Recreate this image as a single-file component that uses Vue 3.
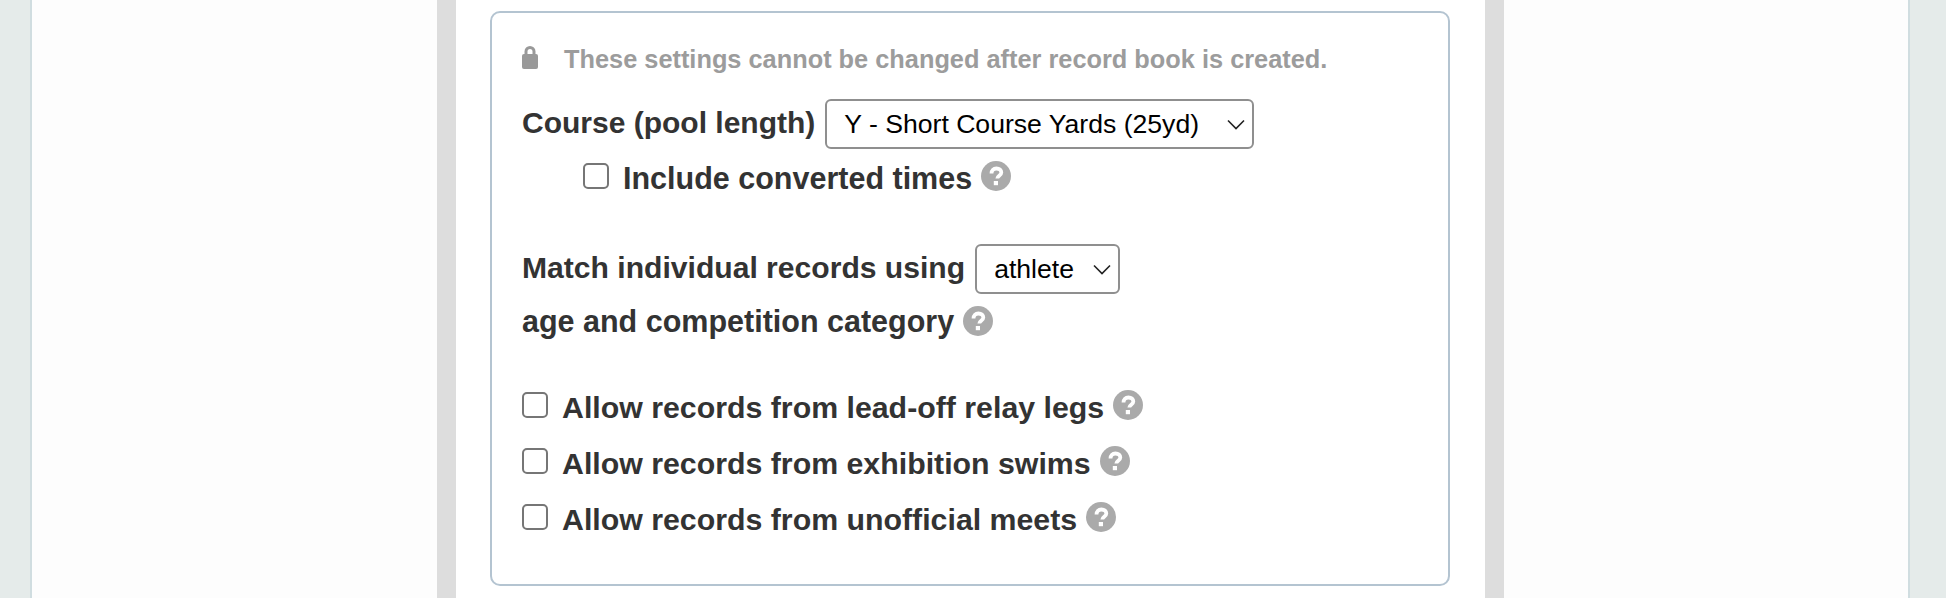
<script setup>
import { ref } from 'vue'

const curso = ref('Y')
const matchBy = ref('athlete')
const converted = ref(false)

const opcoes = ref([
  { id: 1, nome: 'Allow records from lead-off relay legs', marcado: false },
  { id: 2, nome: 'Allow records from exhibition swims', marcado: false },
  { id: 3, nome: 'Allow records from unofficial meets', marcado: false }
])
</script>

<template>
  <div class="page">
    <div class="panel">
      <div class="band">
        <div class="content">
          <svg width="0" height="0" class="defs">
            <symbol id="help" viewBox="0 0 30 30">
              <circle cx="15" cy="15" r="15" fill="#aaaaaa" />
              <path d="M10.500 12.500c0-3.200 2-5 4.900-5 3 0 4.900 1.600 4.900 3.900 0 3.300-4 3.300-4 6.100" fill="none" stroke="#fff" stroke-width="3.800" />
              <rect x="12.800" y="20" width="4.200" height="4.200" fill="#fff" />
            </symbol>
          </svg>
          <div class="box">
            <div class="note">
              <svg class="lock" width="16" height="23" viewBox="0 0 16 23">
                <path d="M4 9V5.500a4 4 0 0 1 8 0V9" fill="none" stroke="#999" stroke-width="3" />
                <rect x="0" y="8" width="16" height="15" rx="2" fill="#999" />
              </svg>
              <span>These settings cannot be changed after record book is created.</span>
            </div>

            <div class="row course">
              <label>Course (pool length)</label>
              <select v-model="curso" class="wide">
                <option value="Y">Y - Short Course Yards (25yd)</option>
                <option value="S">S - Short Course Meters (25m)</option>
                <option value="L">L - Long Course Meters (50m)</option>
              </select>
            </div>
            <div class="row check sub">
              <input v-model="converted" type="checkbox" />
              <label>Include converted times</label>
              <svg class="help"><use href="#help" /></svg>
            </div>

            <div class="row match">
              <label>Match individual records using</label>
              <select v-model="matchBy" class="narrow">
                <option value="athlete">athlete</option>
                <option value="team">team</option>
              </select>
            </div>
            <div class="row age">
              <label>age and competition category</label>
              <svg class="help"><use href="#help" /></svg>
            </div>

            <div class="allow">
              <div v-for="op in opcoes" :key="op.id" class="row check">
                <input v-model="op.marcado" type="checkbox" />
                <label>{{ op.nome }}</label>
                <svg class="help"><use href="#help" /></svg>
              </div>
            </div>
          </div>
        </div>
      </div>
    </div>
  </div>
</template>

<style>
html, body {
  margin: 0;
  overflow: hidden;
}
</style>

<style scoped>
.page {
  height: 598px;
  overflow: hidden;
  background: #e5ebea;
  padding: 0 36px 0 30px;
  font-family: "Liberation Sans", Arial, sans-serif;
}

.panel {
  height: 598px;
  background: #fdfdfd;
  border-left: 2px solid #d0dde0;
  border-right: 2px solid #d0dde0;
  padding: 0 404px 0 405px;
}

.band {
  height: 598px;
  background: #fff;
  border-left: 19px solid #dddddd;
  border-right: 19px solid #dddddd;
  padding: 0 35px 0 34px;
}

.defs {
  position: absolute;
}

.content {
  padding-top: 11px;
}

.box {
  border: 2px solid #b4c4d1;
  border-radius: 10px;
  height: 575px;
  padding: 29px 30px 0 30px;
  box-sizing: border-box;
  background: #fff;
}

.note {
  display: flex;
  align-items: center;
  gap: 26px;
  height: 34px;
  font-size: 25.35px;
  font-weight: 700;
  color: #9c9c9c;
}

.lock {
  margin-top: -3px;
}

.row {
  display: flex;
  align-items: center;
  font-size: 30.3px;
  font-weight: 700;
  color: #333333;
}

.course {
  margin-top: 23px;
  gap: 10px;
}

.course label {
  position: relative;
  top: -1px;
  font-size: 30px;
}

.match {
  margin-top: 48px;
  gap: 10px;
}

.match label {
  position: relative;
  top: -1px;
  font-size: 30.1px;
}

.sub {
  margin-left: 61px;
  margin-top: 7px;
}

.sub label {
  font-size: 30.5px;
  margin-left: 15px;
  top: 2px;
}

.age {
  margin-top: 9px;
}

.age label {
  position: relative;
  top: 1px;
  font-size: 30.5px;
}

.allow {
  margin-top: 47px;
}

.check {
  height: 40px;
  margin-bottom: 16px;
}

.check label {
  margin-left: 14px;
  position: relative;
  top: 3px;
}

.sub.check label {
  top: 2px;
}

.help {
  width: 30px;
  height: 30px;
  margin-left: 9px;
}

select {
  appearance: none;
  height: 50px;
  box-sizing: border-box;
  border: 2px solid #8f8f8f;
  border-radius: 6px;
  font-family: "Liberation Sans", Arial, sans-serif;
  font-size: 26.6px;
  color: #000;
  padding: 0 17px;
  background-color: #fff;
  background-image: url("data:image/svg+xml,%3Csvg xmlns='http://www.w3.org/2000/svg' width='18' height='11'%3E%3Cpath d='M1 1.500l8 8 8-8' fill='none' stroke='%23222' stroke-width='1.600'/%3E%3C/svg%3E");
  background-repeat: no-repeat;
  background-position: right 7px center;
}

.wide {
  width: 429px;
}

.narrow {
  width: 145px;
}

input[type="checkbox"] {
  appearance: none;
  width: 26px;
  height: 26px;
  margin: 0;
  box-sizing: border-box;
  border: 2px solid #767676;
  border-radius: 5px;
  background: #fff;
}
</style>
